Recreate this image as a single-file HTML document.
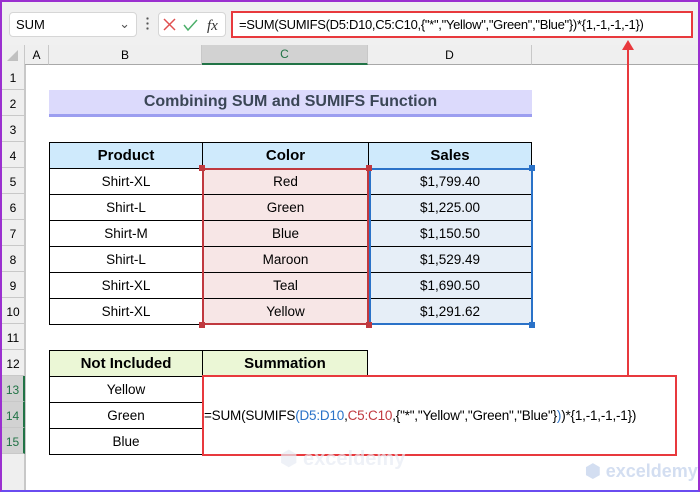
<!DOCTYPE html>
<html><head><meta charset="utf-8"><style>
*{margin:0;padding:0;box-sizing:border-box}
body{width:700px;height:492px;overflow:hidden;position:relative;background:#fff;font-family:"Liberation Sans",sans-serif;font-size:13px;color:#000}
.a{position:absolute}
.c{position:absolute;display:flex;align-items:center;justify-content:center;white-space:nowrap}
.rh{position:absolute;left:2px;width:23px;height:26px;background:#efefef;border-bottom:1px solid #c8c8c8;border-right:1px solid #c8c8c8;display:flex;align-items:flex-end;justify-content:center;padding-bottom:4px;font-size:12px}
.ch{position:absolute;top:45px;height:20px;background:#efefef;border-right:1px solid #c8c8c8;border-bottom:1px solid #a8a8a8;display:flex;align-items:center;justify-content:center;font-size:12px}
.t{position:absolute;border:1px solid #000;display:flex;align-items:center;justify-content:center;font-size:13.5px}
.b{font-weight:bold;font-size:15px}
</style></head><body>
<div class="a" style="left:0;top:0;width:700px;height:45px;background:#f0f0f0"></div>
<div class="a" style="left:9px;top:12px;width:128px;height:25px;background:#fff;border:1px solid #d6d6d6;border-radius:4px;font-size:13px;padding:4px 0 0 6px">SUM<span style="position:absolute;right:6px;top:3px;color:#555">&#8964;</span></div>
<div class="a" style="left:146px;top:16px;width:3px;height:16px;background:radial-gradient(circle,#555 1px,transparent 1.3px) 0 0/3px 5px"></div>
<div class="a" style="left:158px;top:12px;width:68px;height:25px;background:#fff;border:1px solid #d6d6d6;border-radius:4px"></div>
<svg class="a" style="left:162px;top:16px" width="64" height="18"><path d="M2 3l11 11M13 3L2 14" stroke="#e05050" stroke-width="1.5"/><path d="M22 9l4 5 9-10" stroke="#4caf6a" stroke-width="1.5" fill="none"/><text x="45" y="14" font-family="Liberation Serif" font-style="italic" font-size="15" fill="#333">fx</text></svg>
<div class="a" style="left:231px;top:11px;width:462px;height:27px;background:#fff;border:2px solid #e8393d;font-size:13px;letter-spacing:-0.3px;padding:4px 0 0 6px;white-space:nowrap;overflow:hidden">=SUM(SUMIFS(D5:D10,C5:C10,{"*","Yellow","Green","Blue"})*{1,-1,-1,-1})</div>
<div class="ch" style="left:0;width:25px"><svg width="14" height="14"><path d="M13 2V13H2z" fill="#c0c0c0"/></svg></div>
<div class="ch" style="left:25px;width:24px">A</div>
<div class="ch" style="left:49px;width:153px">B</div>
<div class="ch" style="left:202px;width:166px;background:#d2d2d2;border-bottom:2px solid #217346;color:#217346">C</div>
<div class="ch" style="left:368px;width:164px">D</div>
<div class="ch" style="left:532px;width:168px;border-right:none"></div>
<div class="a" style="left:25px;top:65px;width:1px;height:427px;background:#c8c8c8"></div>
<div class="rh" style="top:64px">1</div><div class="rh" style="top:90px">2</div><div class="rh" style="top:116px">3</div><div class="rh" style="top:142px">4</div><div class="rh" style="top:168px">5</div><div class="rh" style="top:194px">6</div><div class="rh" style="top:220px">7</div><div class="rh" style="top:246px">8</div><div class="rh" style="top:272px">9</div><div class="rh" style="top:298px">10</div><div class="rh" style="top:324px">11</div><div class="rh" style="top:350px">12</div>
<div class="rh" style="top:376px;background:#d2d2d2;color:#217346;border-right:2px solid #217346">13</div><div class="rh" style="top:402px;background:#d2d2d2;color:#217346;border-right:2px solid #217346">14</div><div class="rh" style="top:428px;background:#d2d2d2;color:#217346;border-right:2px solid #217346">15</div>
<div class="rh" style="top:454px;height:38px;border-bottom:none"></div>
<div class="c" style="left:49px;top:90px;width:483px;height:27px;background:#dcdafc;border-bottom:3px solid #9c9ef0;font-weight:bold;font-size:16px;color:#3b4656">Combining SUM and SUMIFS Function</div>
<div class="t b" style="left:49px;top:142px;width:154px;height:27px;background:#cfeafc">Product</div>
<div class="t b" style="left:202px;top:142px;width:167px;height:27px;background:#cfeafc">Color</div>
<div class="t b" style="left:368px;top:142px;width:164px;height:27px;background:#cfeafc">Sales</div>
<div class="t" style="left:49px;top:168px;width:154px;height:27px">Shirt-XL</div><div class="t" style="left:202px;top:168px;width:167px;height:27px;background:#f7e6e6">Red</div><div class="t" style="left:368px;top:168px;width:164px;height:27px;background:#e6eef7">$1,799.40</div>
<div class="t" style="left:49px;top:194px;width:154px;height:27px">Shirt-L</div><div class="t" style="left:202px;top:194px;width:167px;height:27px;background:#f7e6e6">Green</div><div class="t" style="left:368px;top:194px;width:164px;height:27px;background:#e6eef7">$1,225.00</div>
<div class="t" style="left:49px;top:220px;width:154px;height:27px">Shirt-M</div><div class="t" style="left:202px;top:220px;width:167px;height:27px;background:#f7e6e6">Blue</div><div class="t" style="left:368px;top:220px;width:164px;height:27px;background:#e6eef7">$1,150.50</div>
<div class="t" style="left:49px;top:246px;width:154px;height:27px">Shirt-L</div><div class="t" style="left:202px;top:246px;width:167px;height:27px;background:#f7e6e6">Maroon</div><div class="t" style="left:368px;top:246px;width:164px;height:27px;background:#e6eef7">$1,529.49</div>
<div class="t" style="left:49px;top:272px;width:154px;height:27px">Shirt-XL</div><div class="t" style="left:202px;top:272px;width:167px;height:27px;background:#f7e6e6">Teal</div><div class="t" style="left:368px;top:272px;width:164px;height:27px;background:#e6eef7">$1,690.50</div>
<div class="t" style="left:49px;top:298px;width:154px;height:27px">Shirt-XL</div><div class="t" style="left:202px;top:298px;width:167px;height:27px;background:#f7e6e6">Yellow</div><div class="t" style="left:368px;top:298px;width:164px;height:27px;background:#e6eef7">$1,291.62</div>
<div class="a" style="left:202px;top:168px;width:167px;height:157px;border:2px solid #c0393f"></div>
<div class="a" style="left:369px;top:168px;width:164px;height:157px;border:2px solid #2a72c8"></div>
<div class="a" style="left:199px;top:165px;width:6px;height:6px;background:#c0393f"></div><div class="a" style="left:366px;top:165px;width:6px;height:6px;background:#c0393f"></div><div class="a" style="left:199px;top:322px;width:6px;height:6px;background:#c0393f"></div><div class="a" style="left:366px;top:322px;width:6px;height:6px;background:#c0393f"></div>
<div class="a" style="left:529px;top:165px;width:6px;height:6px;background:#2a72c8"></div><div class="a" style="left:529px;top:322px;width:6px;height:6px;background:#2a72c8"></div>
<div class="t b" style="left:49px;top:350px;width:154px;height:27px;background:#ebf7d6">Not Included</div>
<div class="t b" style="left:202px;top:350px;width:166px;height:27px;background:#ebf7d6">Summation</div>
<div class="t" style="left:49px;top:376px;width:154px;height:27px">Yellow</div>
<div class="t" style="left:49px;top:402px;width:154px;height:27px">Green</div>
<div class="t" style="left:49px;top:428px;width:154px;height:27px">Blue</div>
<div class="a" style="left:202px;top:375px;width:475px;height:81px;border:2px solid #e8393d;background:#fff;display:flex;align-items:center;font-size:13.5px;white-space:nowrap;letter-spacing:-0.2px">=SUM(SUMIFS<span style="color:#2a72c8">(</span><span style="color:#2a72c8">D5:D10</span>,<span style="color:#c0393f">C5:C10</span>,{"*","Yellow","Green","Blue"}<span style="color:#2a72c8">)</span>)*{1,-1,-1,-1})</div>
<div class="a" style="left:627px;top:44px;width:2px;height:332px;background:#e8393d"></div>
<svg class="a" style="left:622px;top:40px" width="12" height="10"><path d="M6 0L12 10H0z" fill="#e8393d"/></svg>
<div class="a" style="left:280px;top:446px;font-size:20px;font-weight:bold;color:#e8ecf4;opacity:.7">&#11042; exceldemy</div>
<div class="a" style="left:585px;top:461px;font-size:18px;font-weight:bold;color:#d3def1">&#11042; exceldemy</div>
<div class="a" style="left:0;top:0;width:700px;height:492px;border:2px solid #9b30d0;border-bottom-color:#6a4cf0"></div>
</body></html>
